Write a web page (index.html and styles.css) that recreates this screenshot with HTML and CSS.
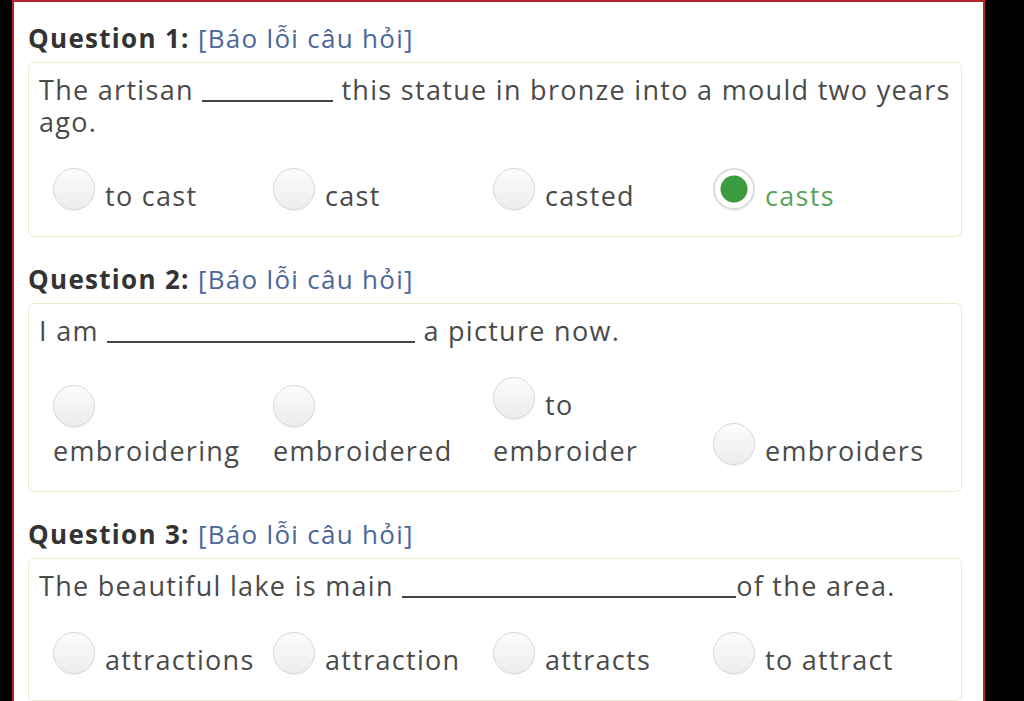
FILE: index.html
```html
<!DOCTYPE html>
<html lang="vi">
<head>
<meta charset="utf-8">
<title>Questions</title>
<link rel="stylesheet" href="styles.css">
</head>
<body>
<div class="frame">
  <div class="question">
    <h3 class="q-head"><span class="q-num">Question 1:</span> <a class="report">[Báo lỗi câu hỏi]</a></h3>
    <div class="card">
      <p class="q-text">The artisan <span class="blank b1"></span> this statue in bronze into a mould two years ago.</p>
      <div class="options">
        <label class="opt"><span class="radio"></span><span class="lbl">to cast</span></label><label class="opt"><span class="radio"></span><span class="lbl">cast</span></label><label class="opt"><span class="radio"></span><span class="lbl">casted</span></label><label class="opt selected"><span class="radio"></span><span class="lbl">casts</span></label>
      </div>
    </div>
  </div>
  <div class="question">
    <h3 class="q-head"><span class="q-num">Question 2:</span> <a class="report">[Báo lỗi câu hỏi]</a></h3>
    <div class="card">
      <p class="q-text">I am <span class="blank b2"></span> a picture now.</p>
      <div class="options">
        <label class="opt"><span class="radio"></span><span class="lbl">embroidering</span></label><label class="opt"><span class="radio"></span><span class="lbl">embroidered</span></label><label class="opt"><span class="radio"></span><span class="lbl">to embroider</span></label><label class="opt"><span class="radio"></span><span class="lbl">embroiders</span></label>
      </div>
    </div>
  </div>
  <div class="question">
    <h3 class="q-head"><span class="q-num">Question 3:</span> <a class="report">[Báo lỗi câu hỏi]</a></h3>
    <div class="card">
      <p class="q-text">The beautiful lake is main <span class="blank b3"></span>of the area.</p>
      <div class="options">
        <label class="opt"><span class="radio"></span><span class="lbl">attractions</span></label><label class="opt"><span class="radio"></span><span class="lbl">attraction</span></label><label class="opt"><span class="radio"></span><span class="lbl">attracts</span></label><label class="opt"><span class="radio"></span><span class="lbl">to attract</span></label>
      </div>
    </div>
  </div>
</div>
</body>
</html>
```
FILE: styles.css
```css
html, body {
  margin: 0;
  padding: 0;
  background: #000;
  height: 100%;
  overflow: hidden;
}
body {
  font-family: "Open Sans", Lato, sans-serif;
  color: #4a4a4a;
  letter-spacing: 1.3px;
}
.frame {
  margin-left: 12px;
  width: 934px;
  min-height: 701px;
  background: #fff;
  border: 2px solid #b3262b;
  border-bottom: none;
  padding: 19px 21px 0 14px;
}
.question + .question .q-head {
  margin-top: 25px;
}
.q-head {
  margin: 0;
  font-size: 26px;
  line-height: 34px;
  font-weight: normal;
}
.q-num {
  font-weight: bold;
  color: #333;
}
.report {
  color: #4a679b;
  cursor: pointer;
}
.card {
  margin-top: 7px;
  border: 1px solid #f1e8d3;
  border-radius: 6px;
  padding: 11px 10px 17px 10px;
  background: #fff;
}
.q-text {
  margin: 0;
  font-size: 27px;
  line-height: 32px;
  color: #4a4a4a;
}
.blank {
  display: inline-block;
  border-bottom: 2px solid #444;
  vertical-align: -2px;
}
.b1 { width: 131px; }
.b2 { width: 308px; }
.b3 { width: 334px; }
.options {
  margin-top: 30px;
  padding-left: 14px;
  font-size: 27px;
  line-height: 1.1;
}
.opt {
  display: inline-block;
  width: 220px;
  vertical-align: baseline;
  cursor: pointer;
}
.radio {
  display: inline-block;
  width: 40px;
  height: 40px;
  border: 1px solid #d9d9d9;
  border-radius: 50%;
  background: linear-gradient(#fcfcfc, #ececec);
  box-shadow: 0 1px 1px rgba(0,0,0,0.08);
  margin-right: 10px;
  vertical-align: -4px;
}
.lbl {
  line-height: 46px;
  color: #4a4a4a;
}
.selected .radio {
  border: 2px solid #dcdcdc;
  width: 38px;
  height: 38px;
  background: radial-gradient(circle, #3c9a3f 0, #3c9a3f 13px, #fff 14px);
}
.selected .lbl {
  color: #5aa35c;
}
```
